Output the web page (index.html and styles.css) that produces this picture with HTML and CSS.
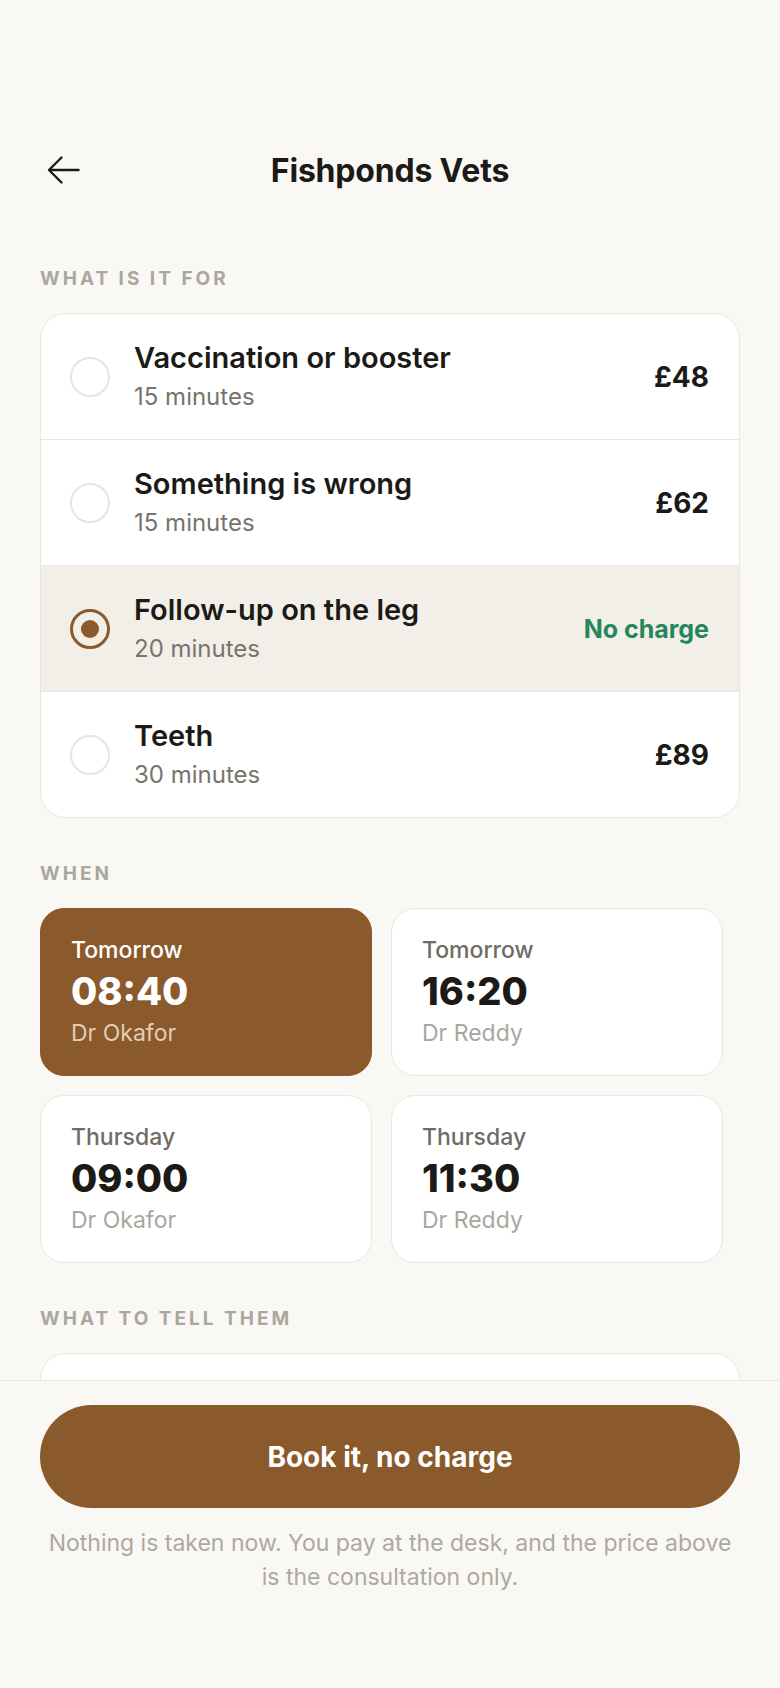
FILE: index.html
```html
<!DOCTYPE html>
<html lang="en">
<head>
  <meta charset="UTF-8" />
  <meta name="viewport" content="width=device-width, initial-scale=1.0"/>
  <title>Book - Fishponds Vets</title>
  <link rel="stylesheet" href="styles.css">
</head>
<body>

  <header class="topbar">
    <button class="back" title="Back">
      <svg width="40" height="40" viewBox="0 0 40 40" fill="none" stroke="#1c1a17" stroke-width="2.4" stroke-linecap="round" stroke-linejoin="round">
        <path d="M38.5 20H10"/>
        <path d="M21.5 7.5L9 20l12.5 12.5"/>
      </svg>
    </button>
    <h1>Fishponds Vets</h1>
    <span></span>
  </header>

  <main class="content">
    <section class="block">
      <h2 class="label">What is it for</h2>
      <div class="options">
        <div class="option">
          <span class="radio"></span>
          <div class="option-text">
            <div class="option-name">Vaccination or booster</div>
            <div class="option-time">15 minutes</div>
          </div>
          <div class="price">£48</div>
        </div>
        <div class="option">
          <span class="radio"></span>
          <div class="option-text">
            <div class="option-name">Something is wrong</div>
            <div class="option-time">15 minutes</div>
          </div>
          <div class="price">£62</div>
        </div>
        <div class="option selected">
          <span class="radio"><span class="dot"></span></span>
          <div class="option-text">
            <div class="option-name">Follow-up on the leg</div>
            <div class="option-time">20 minutes</div>
          </div>
          <div class="price free">No charge</div>
        </div>
        <div class="option">
          <span class="radio"></span>
          <div class="option-text">
            <div class="option-name">Teeth</div>
            <div class="option-time">30 minutes</div>
          </div>
          <div class="price">£89</div>
        </div>
      </div>
    </section>

    <section class="block">
      <h2 class="label">When</h2>
      <div class="slots">
        <div class="slot selected">
          <div class="slot-day">Tomorrow</div>
          <div class="slot-time">08:40</div>
          <div class="slot-vet">Dr Okafor</div>
        </div>
        <div class="slot">
          <div class="slot-day">Tomorrow</div>
          <div class="slot-time">16:20</div>
          <div class="slot-vet">Dr Reddy</div>
        </div>
        <div class="slot">
          <div class="slot-day">Thursday</div>
          <div class="slot-time">09:00</div>
          <div class="slot-vet">Dr Okafor</div>
        </div>
        <div class="slot">
          <div class="slot-day">Thursday</div>
          <div class="slot-time">11:30</div>
          <div class="slot-vet">Dr Reddy</div>
        </div>
      </div>
    </section>

    <section class="block">
      <h2 class="label">What to tell them</h2>
      <div class="notes"></div>
    </section>
  </main>

  <footer class="footer">
    <button class="book">Book it, no charge</button>
    <p class="note">Nothing is taken now. You pay at the desk, and the price above is the consultation only.</p>
  </footer>

</body>
</html>
```

FILE: styles.css
```css
body {
  margin: 0;
  padding: 0;
  background: #faf8f4;
  font-family: Inter, "Noto Sans", sans-serif;
  color: #1c1a17;
}
.topbar {
  display: grid;
  grid-template-columns: 40px 1fr 40px;
  align-items: center;
  height: 40px;
  padding: 150px 40px 0;
}
.back {
  width: 40px;
  height: 40px;
  padding: 0;
  border: none;
  background: none;
  cursor: pointer;
}
.back svg {
  display: block;
}
h1 {
  margin: 0;
  text-align: center;
  font-size: 32px;
  font-weight: 700;
  letter-spacing: -0.2px;
}
.content {
  padding: 77px 40px 200px;
}
.block {
  margin-bottom: 44px;
}
.label {
  margin: 0 0 22px;
  font-size: 19px;
  line-height: 24px;
  font-weight: 700;
  letter-spacing: 3px;
  text-transform: uppercase;
  color: #aaa79e;
}
.options {
  background: #fff;
  border: 1px solid #ebe7df;
  border-radius: 26px;
  overflow: hidden;
}
.option {
  display: flex;
  align-items: center;
  gap: 24px;
  padding: 27px 30px 27px 29px;
  border-bottom: 1px solid #ebe7df;
}
.option:last-child {
  border-bottom: none;
}
.option.selected {
  background: #f2efe9;
}
.radio {
  box-sizing: border-box;
  width: 40px;
  height: 40px;
  flex: none;
  border: 2px solid #e8e5de;
  border-radius: 50%;
  display: flex;
  align-items: center;
  justify-content: center;
}
.option.selected .radio {
  border: 3px solid #8a5a2c;
}
.dot {
  width: 18px;
  height: 18px;
  border-radius: 50%;
  background: #8a5a2c;
}
.option-text {
  flex: 1;
}
.option-name {
  font-size: 29px;
  line-height: 34px;
  font-weight: 600;
}
.option-time {
  margin-top: 6px;
  font-size: 24px;
  line-height: 31px;
  color: #77746d;
}
.price {
  font-size: 28px;
  font-weight: 700;
}
.price.free {
  font-size: 25px;
  color: #24875a;
}
.slots {
  display: grid;
  grid-template-columns: repeat(2, 332px);
  gap: 19px;
}
.slot {
  background: #fff;
  border: 1px solid #ebe7df;
  border-radius: 24px;
  padding: 27px 30px;
}
.slot.selected {
  background: #8a5a2c;
  border-color: #8a5a2c;
}
.slot-day {
  font-size: 23px;
  line-height: 28px;
  font-weight: 500;
  color: #6f6c66;
}
.slot-time {
  margin-top: 3px;
  font-size: 38px;
  line-height: 48px;
  font-weight: 800;
}
.slot-vet {
  margin-top: 3px;
  font-size: 23px;
  line-height: 30px;
  color: #a9a69e;
}
.slot.selected .slot-day,
.slot.selected .slot-time {
  color: #fff;
}
.slot.selected .slot-vet {
  color: #e3cdb4;
}
.notes {
  height: 140px;
  background: #fff;
  border: 1px solid #ebe7df;
  border-radius: 26px;
}
.footer {
  position: fixed;
  left: 0;
  right: 0;
  bottom: 0;
  box-sizing: border-box;
  height: 308px;
  padding: 24px 40px 0;
  background: #faf8f4;
  border-top: 1px solid #e9e5dd;
}
.book {
  display: block;
  width: 100%;
  height: 103px;
  border: none;
  border-radius: 60px;
  background: #8a5a2c;
  color: #fff;
  font-family: Inter, "Noto Sans", sans-serif;
  font-size: 28px;
  font-weight: 700;
  cursor: pointer;
}
.note {
  margin: 18px 0 0;
  text-align: center;
  font-size: 23px;
  line-height: 34px;
  color: #aca99f;
}
```
